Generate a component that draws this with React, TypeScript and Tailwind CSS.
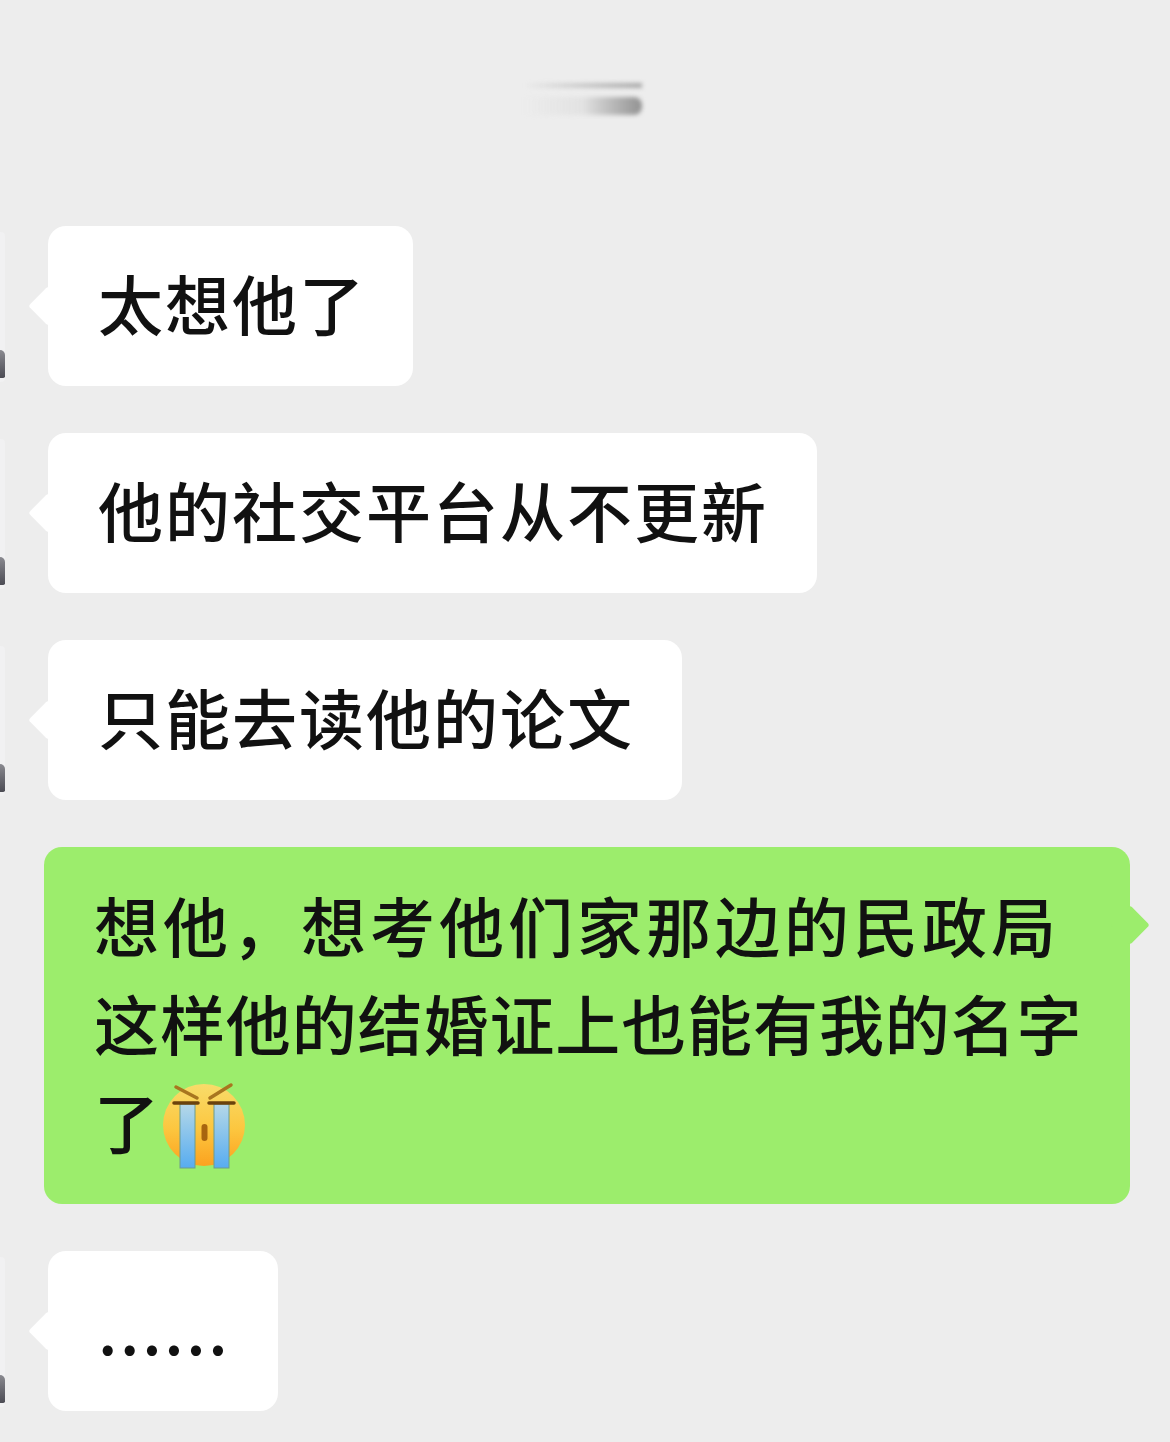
const FONT = "font-['Noto_Sans_CJK_SC','Noto_Sans',sans-serif]";

const INCOMING: Array<{ text: string; width: string; spacing: string }> = [
  { text: '太想他了', width: 'w-[365px]', spacing: 'tracking-[2px]' },
  { text: '他的社交平台从不更新', width: 'w-[769px]', spacing: 'tracking-[2px]' },
  { text: '只能去读他的论文', width: 'w-[634px]', spacing: 'tracking-[2px]' },
];

function CryingFace() {
  return (
    <svg width="90" height="90" viewBox="0 0 90 90" className="ml-[1px] mt-[10px] shrink-0">
      <defs>
        <linearGradient id="face" x1="0" y1="0" x2="0" y2="1">
          <stop offset="0" stopColor="#f8dc6a" />
          <stop offset="0.55" stopColor="#fcc63f" />
          <stop offset="1" stopColor="#fba21f" />
        </linearGradient>
        <linearGradient id="tear" x1="0" y1="0" x2="0" y2="1">
          <stop offset="0" stopColor="#b5d8e8" />
          <stop offset="1" stopColor="#57acf0" />
        </linearGradient>
      </defs>
      <circle cx="44" cy="45" r="41" fill="url(#face)" />
      <path d="M16 7 37 18M71 5 50 18" stroke="#a8761f" strokeWidth="3.5" strokeLinecap="round" />
      <rect x="20" y="24" width="15" height="64" fill="url(#tear)" stroke="#6d9c8c" strokeWidth="1" />
      <rect x="54" y="24" width="15" height="64" fill="url(#tear)" stroke="#6d9c8c" strokeWidth="1" />
      <path d="M14 23H38M49 23H74" stroke="#6b430c" strokeWidth="3.5" strokeLinecap="round" />
      <rect x="41.5" y="44" width="6" height="17" rx="3" fill="#a8650f" />
    </svg>
  );
}

function Avatar() {
  return (
    <div className="flex h-[150px] w-[5px] shrink-0 items-end overflow-hidden rounded-r-sm bg-[#f1f1f2] pb-[4px]">
      <div className="h-[28px] w-[5px] rounded-r-[5px] rounded-tr-[14px] bg-gradient-to-b from-[#8a8a90] to-[#4c4c54]" />
    </div>
  );
}

function IncomingRow({ text, width, spacing }: { text: string; width: string; spacing: string }) {
  return (
    <div className="flex items-start gap-[43px]">
      <div className="pt-[6px]">
        <Avatar />
      </div>
      <div className={`relative flex h-[160px] items-center rounded-[18px] bg-white pb-[8px] pl-[50px] ${width}`}>
        <span className="absolute left-[-14px] top-[66px] h-[28px] w-[28px] rotate-45 rounded-[3px] bg-white" />
        <span className={`relative whitespace-nowrap text-[65px] font-medium leading-none text-[#111111] ${spacing}`}>{text}</span>
      </div>
    </div>
  );
}

export default function App() {
  return (
    <div className={`h-[1442px] w-[1170px] overflow-hidden bg-[#ededed] ${FONT}`}>
      <header className="flex h-[226px] justify-center pr-[4px] pt-[83px]">
        <div className="flex h-[34px] w-[118px] flex-col gap-[9px] blur-[2px]">
          <div className="h-[5px] w-full bg-gradient-to-r from-transparent to-[#a8a8a8]" />
          <div className="h-[18px] w-full rounded-r-lg bg-gradient-to-r from-transparent via-[#e2e2e2] to-[#929292]" />
        </div>
      </header>

      <div className="flex flex-col gap-[47px]">
        {INCOMING.map((m) => (
          <IncomingRow key={m.text} text={m.text} width={m.width} spacing={m.spacing} />
        ))}

        <div className="pl-[44px]">
          <div className="relative h-[357px] w-[1086px] rounded-[18px] bg-[#9ced6c] pl-[50px] pt-[28px]">
            <span className="absolute right-[-14px] top-[64px] h-[28px] w-[28px] rotate-45 rounded-[3px] bg-[#9ced6c]" />
            <div className="relative text-[65px] font-medium leading-[98px] text-[#111111]">
              <div className="whitespace-nowrap tracking-[4px]">想他，想考他们家那边的民政局</div>
              <div className="whitespace-nowrap tracking-[0.9px]">这样他的结婚证上也能有我的名字</div>
              <div className="flex h-[98px] items-center">
                <span>了</span>
                <CryingFace />
              </div>
            </div>
          </div>
        </div>

        <IncomingRow text="......" width="w-[230px]" spacing="tracking-[2.7px]" />
      </div>
    </div>
  );
}
